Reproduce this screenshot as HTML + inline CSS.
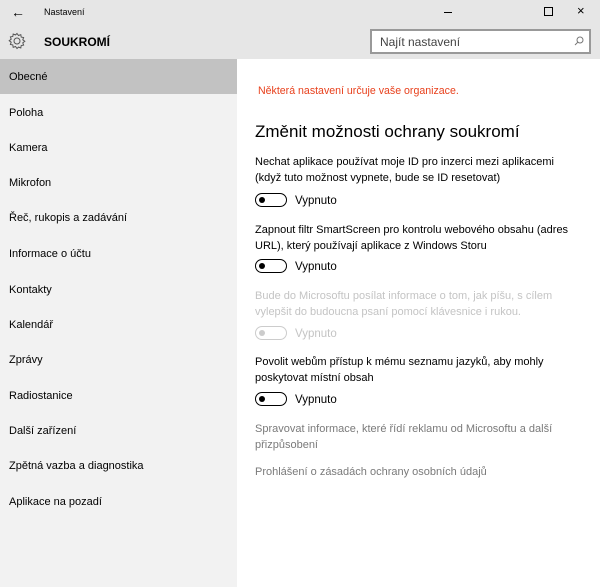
<!DOCTYPE html>
<html><head><meta charset="utf-8"><style>
*{margin:0;padding:0;box-sizing:border-box}
body{width:600px;height:587px;position:relative;overflow:hidden;background:#fff;font-family:"Liberation Sans",sans-serif;color:#000}
.t{position:absolute;white-space:nowrap}
#top{position:absolute;left:0;top:0;width:600px;height:59px;background:#e6e6e6}
#side{position:absolute;left:0;top:59px;width:237px;height:528px;background:#f2f2f2}
#sel{position:absolute;left:0;top:59px;width:237px;height:35px;background:#c2c2c2}
.nav{position:absolute;left:9px;font-size:11px;color:#000;white-space:nowrap}
.p{position:absolute;left:255px;font-size:11px;line-height:15.5px;color:#000;white-space:nowrap}
.tg{position:absolute;left:255px;width:32px;height:14px;border:1.5px solid #000;border-radius:7px}
.tg::after{content:"";position:absolute;left:3px;top:2.5px;width:6px;height:6px;border-radius:50%;background:#000}
.tg.d{border-color:#ccc}.tg.d::after{background:#ccc}
.v{position:absolute;left:295px;font-size:11.5px;margin-top:2px}
</style></head><body>
<div id="top"></div>
<div class="t" style="left:11px;top:4px;font-size:14px">&#8592;</div>
<div class="t" style="left:44px;top:7px;font-size:9px">Nastavení</div>
<div style="position:absolute;left:444px;top:12px;width:8px;height:1px;background:#000"></div>
<div style="position:absolute;left:544px;top:7px;width:9px;height:9px;border:1px solid #000"></div>
<div class="t" style="left:577px;top:3px;font-size:13px">&#215;</div>
<svg style="position:absolute;left:8px;top:32px" width="18" height="18" viewBox="0 0 18 18"><circle cx="9" cy="9" r="3" fill="none" stroke="#555" stroke-width="1"/><path d="M9 1.5l1.5 2 2.3-.8.4 2.4 2.4.4-.8 2.3 2 1.5-2 1.5.8 2.3-2.4.4-.4 2.4-2.3-.8L9 16.5l-1.5-2-2.3.8-.4-2.4-2.4-.4.8-2.3-2-1.5 2-1.5-.8-2.3 2.4-.4.4-2.4 2.3.8z" fill="none" stroke="#555" stroke-width="1"/></svg>
<div class="t" style="left:44px;top:35px;font-size:12px;font-weight:bold">SOUKROMÍ</div>
<div style="position:absolute;left:370px;top:29px;width:221px;height:25px;border:2px solid #999;background:#fff"></div>
<div class="t" style="left:380px;top:35px;font-size:12px;color:#444">Najít nastavení</div>
<svg style="position:absolute;left:574px;top:36px" width="10" height="10"><circle cx="6" cy="4" r="3" fill="none" stroke="#777"/><path d="M4 6L1 9" stroke="#777"/></svg>
<div id="side"></div><div id="sel"></div>
<div class="nav" style="top:71px">Obecné</div>
<div class="nav" style="top:107px">Poloha</div>
<div class="nav" style="top:142px">Kamera</div>
<div class="nav" style="top:177px">Mikrofon</div>
<div class="nav" style="top:212px">Řeč, rukopis a zadávání</div>
<div class="nav" style="top:248px">Informace o účtu</div>
<div class="nav" style="top:284px">Kontakty</div>
<div class="nav" style="top:319px">Kalendář</div>
<div class="nav" style="top:354px">Zprávy</div>
<div class="nav" style="top:390px">Radiostanice</div>
<div class="nav" style="top:425px">Další zařízení</div>
<div class="nav" style="top:460px">Zpětná vazba a diagnostika</div>
<div class="nav" style="top:496px">Aplikace na pozadí</div>
<div class="t" style="left:258px;top:85px;font-size:10.6px;color:#e8401c">Některá nastavení určuje vaše organizace.</div>
<div class="t" style="left:255px;top:122px;font-size:17px">Změnit možnosti ochrany soukromí</div>
<div class="p" style="top:155px">Nechat aplikace používat moje ID pro inzerci mezi aplikacemi<br>(když tuto možnost vypnete, bude se ID resetovat)</div>
<div class="tg" style="top:193px"></div><div class="v" style="top:193px">Vypnuto</div>
<div class="p" style="top:223px">Zapnout filtr SmartScreen pro kontrolu webového obsahu (adres<br>URL), který používají aplikace z Windows Storu</div>
<div class="tg" style="top:259px"></div><div class="v" style="top:259px">Vypnuto</div>
<div class="p" style="top:289px;color:#c4c4c4">Bude do Microsoftu posílat informace o tom, jak píšu, s cílem<br>vylepšit do budoucna psaní pomocí klávesnice i rukou.</div>
<div class="tg d" style="top:326px"></div><div class="v" style="top:326px;color:#c4c4c4">Vypnuto</div>
<div class="p" style="top:355px">Povolit webům přístup k mému seznamu jazyků, aby mohly<br>poskytovat místní obsah</div>
<div class="tg" style="top:392px"></div><div class="v" style="top:392px">Vypnuto</div>
<div class="p" style="top:422px;color:#7a7a7a">Spravovat informace, které řídí reklamu od Microsoftu a další<br>přizpůsobení</div>
<div class="p" style="top:465px;color:#7a7a7a">Prohlášení o zásadách ochrany osobních údajů</div>
</body></html>
